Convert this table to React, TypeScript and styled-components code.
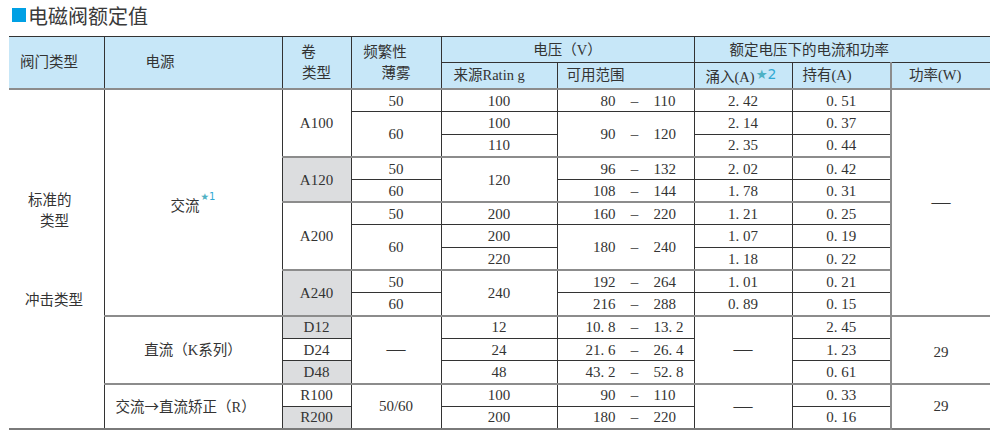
import styled, { createGlobalStyle, css } from 'styled-components';

const GlobalStyle = createGlobalStyle`
  html, body {
    margin: 0;
    padding: 0;
    background: #ffffff;
  }
  body {
    font-family: 'Liberation Serif', 'Noto Sans CJK SC', serif;
    color: #333333;
  }
`;

const THIN = '1px solid #333333';
const THICK = '2px solid #8c8c8c';

const Page = styled.div`
  width: 1000px;
  padding: 0 10px 0 9px;
  box-sizing: border-box;
`;

const TitleBar = styled.h2`
  display: flex;
  align-items: center;
  height: 30px;
  margin: 0 0 6px 3px;
  font: 400 20px 'Noto Sans CJK SC', sans-serif;
  color: #3a3a3a;
`;

const TitleMark = styled.span`
  width: 14px;
  height: 14px;
  margin-right: 2px;
  background: #00a0e4;
`;

const Grid = styled.table`
  width: 981px;
  border-collapse: collapse;
  table-layout: fixed;
  border-style: solid hidden;
  border-top: 1px solid #222222;
  border-bottom: 2px solid #7a7a7a;
`;

const Col = styled.col<{ $w: number }>`
  width: ${(p) => p.$w}px;
`;

const HeadRow = styled.tr`
  height: 26px;
`;

const BodyRow = styled.tr`
  height: 22.67px;
`;

interface CellProps {
  $shade?: boolean;
  $tb?: boolean;
  $tl?: boolean;
  $align?: 'left' | 'center';
  $pl?: number;
  $pt?: number;
}

const cellBase = css<CellProps>`
  padding: ${(p) => p.$pt || 0}px 0 0 ${(p) => p.$pl || 0}px;
  border: ${THIN};
  text-align: ${(p) => p.$align || 'center'};
  vertical-align: middle;
  white-space: nowrap;
  ${(p) => p.$tb && css`border-bottom: ${THICK};`}
  ${(p) => p.$tl && css`border-left: ${THICK};`}
`;

const Th = styled.th<CellProps>`
  ${cellBase};
  background: #c7e7f8;
  font-weight: 400;
  font-size: 14.5px;
  line-height: 21px;
  color: #333333;
`;

const Td = styled.td<CellProps>`
  ${cellBase};
  background: ${(p) => (p.$shade ? '#dcdddf' : '#ffffff')};
  font-size: 15px;
  line-height: 18px;
`;

const Line = styled.div<{ $shift?: number }>`
  padding-right: ${(p) => p.$shift || 0}px;
`;

const Note = styled.sup<{ $size: number; $raise: number }>`
  display: inline-block;
  margin-left: 1px;
  font-family: 'DejaVu Sans', sans-serif;
  font-size: ${(p) => p.$size}px;
  line-height: 0;
  vertical-align: ${(p) => p.$raise}px;
  color: #31a9d4;

  b {
    font-weight: 400;
    font-size: 0.95em;
    color: #4fb1c4;
  }
`;

const Label = styled.span`
  font-size: 14.5px;
`;

const Arrow = styled.span`
  font-family: 'Noto Sans CJK SC', sans-serif;
`;

const SideCell = styled.td`
  padding: 100px 0 0 0;
  border: ${THIN};
  border-bottom: none;
  vertical-align: top;
  font-size: 14.5px;
  line-height: 21px;
`;

const SideLine = styled.div<{ $indent: number; $gap?: number }>`
  padding-left: ${(p) => p.$indent}px;
  margin-top: ${(p) => p.$gap || 0}px;
`;

const RangeBox = styled.div`
  display: grid;
  grid-template-columns: 58px 38px 1fr;
  align-items: center;
`;

const Lo = styled.span`
  text-align: right;
`;

const Sep = styled.span`
  text-align: center;
`;

const Hi = styled.span`
  text-align: left;
`;

const Dash = styled.span`
  font-size: 19px;
  line-height: 18px;
`;

const Range = ({ lo, hi }: { lo: string; hi: string }) => (
  <RangeBox>
    <Lo>{lo}</Lo>
    <Sep>–</Sep>
    <Hi>{hi}</Hi>
  </RangeBox>
);

const Star = ({ n, size, raise }: { n: number; size: number; raise: number }) => (
  <Note $size={size} $raise={raise}>
    <b>★</b>
    {n}
  </Note>
);

const App = () => {
  return (
    <Page>
      <GlobalStyle />
      <TitleBar>
        <TitleMark />
        电磁阀额定值
      </TitleBar>
      <Grid>
        <colgroup>
          <Col $w={95} />
          <Col $w={178} />
          <Col $w={69} />
          <Col $w={90} />
          <Col $w={116} />
          <Col $w={137} />
          <Col $w={98} />
          <Col $w={99} />
          <Col $w={99} />
        </colgroup>
        <thead>
          <HeadRow>
            <Th rowSpan={2} $tb $align="left" $pl={11}>
              阀门类型
            </Th>
            <Th rowSpan={2} $tb $align="left" $pl={41}>
              电源
            </Th>
            <Th rowSpan={2} $tb>
              <Line $shift={16}>卷</Line>
              <Line>类型</Line>
            </Th>
            <Th rowSpan={2} $tb $pt={1}>
              <Line $shift={22}>频繁性</Line>
              <Line>薄雾</Line>
            </Th>
            <Th colSpan={2} $pt={2}>
              电压（V）
            </Th>
            <Th colSpan={3} $align="left" $pl={35} $pt={2}>
              额定电压下的电流和功率
            </Th>
          </HeadRow>
          <HeadRow>
            <Th $tb $align="left" $pl={12}>
              来源Ratin g
            </Th>
            <Th $tb $align="left" $pl={9}>
              可用范围
            </Th>
            <Th $tb $align="left" $pl={11} $pt={4}>
              涌入(A)
              <Star n={2} size={14} raise={3} />
            </Th>
            <Th $tb $align="left" $pl={10}>
              持有(A)
            </Th>
            <Th $tb $tl $align="left" $pl={17}>
              功率(W)
            </Th>
          </HeadRow>
        </thead>
        <tbody>
          <BodyRow>
            <SideCell rowSpan={15}>
              <SideLine $indent={19}>标准的</SideLine>
              <SideLine $indent={31}>类型</SideLine>
              <SideLine $indent={16} $gap={58}>
                冲击类型
              </SideLine>
            </SideCell>
            <Td rowSpan={10} $tb $pt={7}>
              <Label>交流</Label>
              <Star n={1} size={10} raise={11} />
            </Td>
            <Td rowSpan={3} $tb>A100</Td>
            <Td>50</Td>
            <Td>100</Td>
            <Td>
              <Range lo="80" hi="110" />
            </Td>
            <Td>2. 42</Td>
            <Td>0. 51</Td>
            <Td rowSpan={10} $tb $tl>
              <Dash>—</Dash>
            </Td>
          </BodyRow>
          <BodyRow>
            <Td rowSpan={2} $tb>60</Td>
            <Td>100</Td>
            <Td rowSpan={2} $tb>
              <Range lo="90" hi="120" />
            </Td>
            <Td>2. 14</Td>
            <Td>0. 37</Td>
          </BodyRow>
          <BodyRow>
            <Td $tb>110</Td>
            <Td $tb>2. 35</Td>
            <Td $tb>0. 44</Td>
          </BodyRow>
          <BodyRow>
            <Td rowSpan={2} $tb $shade>A120</Td>
            <Td>50</Td>
            <Td rowSpan={2} $tb>120</Td>
            <Td>
              <Range lo="96" hi="132" />
            </Td>
            <Td>2. 02</Td>
            <Td>0. 42</Td>
          </BodyRow>
          <BodyRow>
            <Td $tb>60</Td>
            <Td $tb>
              <Range lo="108" hi="144" />
            </Td>
            <Td $tb>1. 78</Td>
            <Td $tb>0. 31</Td>
          </BodyRow>
          <BodyRow>
            <Td rowSpan={3} $tb>A200</Td>
            <Td>50</Td>
            <Td>200</Td>
            <Td>
              <Range lo="160" hi="220" />
            </Td>
            <Td>1. 21</Td>
            <Td>0. 25</Td>
          </BodyRow>
          <BodyRow>
            <Td rowSpan={2} $tb>60</Td>
            <Td>200</Td>
            <Td rowSpan={2} $tb>
              <Range lo="180" hi="240" />
            </Td>
            <Td>1. 07</Td>
            <Td>0. 19</Td>
          </BodyRow>
          <BodyRow>
            <Td $tb>220</Td>
            <Td $tb>1. 18</Td>
            <Td $tb>0. 22</Td>
          </BodyRow>
          <BodyRow>
            <Td rowSpan={2} $tb $shade>A240</Td>
            <Td>50</Td>
            <Td rowSpan={2} $tb>240</Td>
            <Td>
              <Range lo="192" hi="264" />
            </Td>
            <Td>1. 01</Td>
            <Td>0. 21</Td>
          </BodyRow>
          <BodyRow>
            <Td $tb>60</Td>
            <Td $tb>
              <Range lo="216" hi="288" />
            </Td>
            <Td $tb>0. 89</Td>
            <Td $tb>0. 15</Td>
          </BodyRow>
          <BodyRow>
            <Td rowSpan={3} $tb>
              <Label>直流（K系列）</Label>
            </Td>
            <Td $shade>D12</Td>
            <Td rowSpan={3} $tb>
              <Dash>—</Dash>
            </Td>
            <Td>12</Td>
            <Td>
              <Range lo="10. 8" hi="13. 2" />
            </Td>
            <Td rowSpan={3} $tb>
              <Dash>—</Dash>
            </Td>
            <Td>2. 45</Td>
            <Td rowSpan={3} $tb $tl $pt={4}>29</Td>
          </BodyRow>
          <BodyRow>
            <Td>D24</Td>
            <Td>24</Td>
            <Td>
              <Range lo="21. 6" hi="26. 4" />
            </Td>
            <Td>1. 23</Td>
          </BodyRow>
          <BodyRow>
            <Td $tb $shade>D48</Td>
            <Td $tb>48</Td>
            <Td $tb>
              <Range lo="43. 2" hi="52. 8" />
            </Td>
            <Td $tb>0. 61</Td>
          </BodyRow>
          <BodyRow>
            <Td rowSpan={2} $align="left" $pl={11}>
              <Label>
                交流<Arrow>→</Arrow>直流矫正（R）
              </Label>
            </Td>
            <Td>R100</Td>
            <Td rowSpan={2}>50/60</Td>
            <Td>100</Td>
            <Td>
              <Range lo="90" hi="110" />
            </Td>
            <Td rowSpan={2}>
              <Dash>—</Dash>
            </Td>
            <Td>0. 33</Td>
            <Td rowSpan={2} $tl>29</Td>
          </BodyRow>
          <BodyRow>
            <Td $shade>R200</Td>
            <Td>200</Td>
            <Td>
              <Range lo="180" hi="220" />
            </Td>
            <Td>0. 16</Td>
          </BodyRow>
        </tbody>
      </Grid>
    </Page>
  );
};

export default App;
